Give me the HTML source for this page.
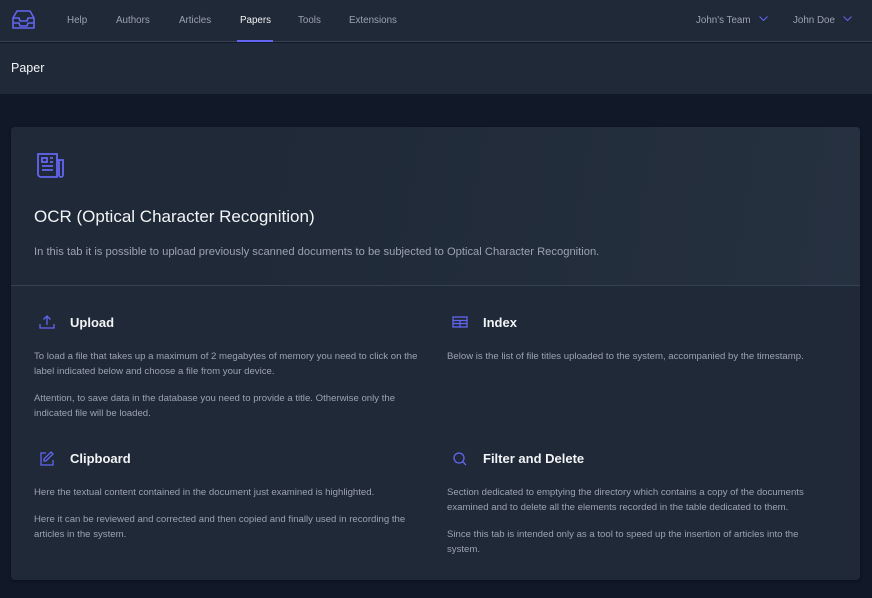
<!DOCTYPE html>
<html><head><meta charset="utf-8"><style>
*{margin:0;padding:0;box-sizing:border-box}
body{width:872px;height:598px;background:#111827;font-family:"Liberation Sans",sans-serif;overflow:hidden;position:relative}
.nav{position:absolute;left:0;top:0;width:872px;height:42px;background:#1f2937;border-bottom:1px solid #374151}
.nav a{position:absolute;top:15px;font-size:9.8px;color:#9ca3af}
.nav a.act{color:#f3f4f6}
.ul{position:absolute;left:237px;top:40px;width:36px;height:2px;background:#6366f1}
.hdr{position:absolute;left:0;top:43px;width:872px;height:51px;background:#1f2937}
.hdr span{position:absolute;left:11px;top:18px;font-size:12.5px;color:#f3f4f6}
.card{position:absolute;left:11px;top:127px;width:849px;height:453px;background:#1f2937;border-radius:4px;box-shadow:0 1px 3px rgba(0,0,0,.4)}
.top{height:159px;border-bottom:1px solid #374151;background:linear-gradient(100deg,#1f2937 30%,#263140 100%);border-radius:4px 4px 0 0}
h1{position:absolute;left:23px;top:80px;font-size:17px;font-weight:normal;color:#f3f4f6}
.lead{position:absolute;left:23px;top:119px;font-size:11.2px;color:#9ca3af}
.sec{position:absolute;width:390px}
.sec h2{position:absolute;left:36px;top:0;font-size:13px;color:#f3f4f6;font-weight:bold}
.sec svg{position:absolute;left:0;top:0}
.sec p{font-size:9.6px;line-height:15px;color:#9ca3af;margin-top:12px}
.sec .body{position:absolute;left:0;top:22px;width:385px}
.chev{display:inline-block;margin-left:8px;vertical-align:2px}
</style></head><body>
<div class="nav">
<svg style="position:absolute;left:12px;top:10px" width="23" height="20" viewBox="0 0 23 20" fill="none" stroke="#6366f1" stroke-width="1.6" stroke-linejoin="round"><path d="M5 1h13l4 7v10H1V8z"/><path d="M1 8h6l1 3h7l1-3h6"/><path d="M1 13h6l1 3h7l1-3h6"/></svg>
<a style="left:67px">Help</a><a style="left:116px">Authors</a><a style="left:179px">Articles</a><a class="act" style="left:240px">Papers</a><a style="left:298px">Tools</a><a style="left:349px">Extensions</a>
<a style="left:696px">John's Team<svg class="chev" width="9" height="5"><path d="M0.5 0.5l4 4 4-4" stroke="#6366f1" fill="none"/></svg></a>
<a style="left:793px">John Doe<svg class="chev" width="9" height="5"><path d="M0.5 0.5l4 4 4-4" stroke="#6366f1" fill="none"/></svg></a>
<div class="ul"></div>
</div>
<div class="hdr"><span>Paper</span></div>
<div class="card">
<div class="top"></div>
<svg style="position:absolute;left:26px;top:25px" width="29" height="27" viewBox="0 0 29 27" fill="none" stroke="#6366f1" stroke-width="1.8"><path d="M1 2h19v23H4a3 3 0 0 1-3-3z"/><path d="M20 8h6v15a2 2 0 0 1-4 0V8"/><rect x="5" y="6" width="5" height="4"/><path d="M13 6h3M13 10h3M5 14h11M5 18h11"/></svg>
<h1>OCR (Optical Character Recognition)</h1>
<div class="lead">In this tab it is possible to upload previously scanned documents to be subjected to Optical Character Recognition.</div>

<div class="sec" style="left:23px;top:188px">
<svg width="26" height="16" viewBox="0 0 26 16" fill="none" stroke="#6366f1" stroke-width="1.3"><path d="M6 9v4h14V9M13 1v9M9.5 4.5L13 1l3.5 3.5"/></svg>
<h2>Upload</h2>
<div class="body"><p>To load a file that takes up a maximum of 2 megabytes of memory you need to click on the label indicated below and choose a file from your device.</p><p>Attention, to save data in the database you need to provide a title. Otherwise only the indicated file will be loaded.</p></div>
</div>
<div class="sec" style="left:436px;top:188px">
<svg width="26" height="16" viewBox="0 0 26 16" fill="none" stroke="#6366f1" stroke-width="1.3"><rect x="6" y="2" width="14" height="10"/><path d="M6 5.5h14M6 8.5h14M13 5.5v6.5"/></svg>
<h2>Index</h2>
<div class="body"><p>Below is the list of file titles uploaded to the system, accompanied by the timestamp.</p></div>
</div>
<div class="sec" style="left:23px;top:324px">
<svg width="26" height="16" viewBox="0 0 26 16" fill="none" stroke="#6366f1" stroke-width="1.3"><path d="M12 2H7v12h12V9"/><path d="M17 1l2 2-7 7h-2V8z"/></svg>
<h2>Clipboard</h2>
<div class="body"><p>Here the textual content contained in the document just examined is highlighted.</p><p>Here it can be reviewed and corrected and then copied and finally used in recording the articles in the system.</p></div>
</div>
<div class="sec" style="left:436px;top:324px">
<svg width="26" height="16" viewBox="0 0 26 16" fill="none" stroke="#6366f1" stroke-width="1.3"><circle cx="12" cy="7" r="5"/><path d="M15.5 10.5L19 14"/></svg>
<h2>Filter and Delete</h2>
<div class="body"><p>Section dedicated to emptying the directory which contains a copy of the documents examined and to delete all the elements recorded in the table dedicated to them.</p><p>Since this tab is intended only as a tool to speed up the insertion of articles into the system.</p></div>
</div>
</div>
</body></html>
